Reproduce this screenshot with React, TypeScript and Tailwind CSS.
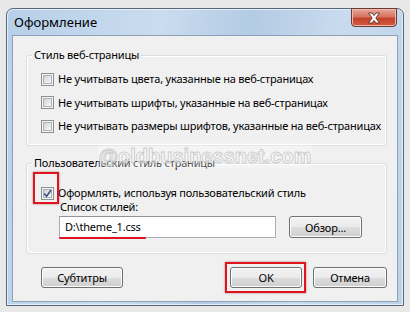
const btn =
  'h-[21px] rounded-[3px] border border-[#707070] bg-[linear-gradient(to_bottom,#f2f2f2_0%,#ebebeb_50%,#dddddd_51%,#cfcfcf_100%)] shadow-[inset_0_0_0_1px_#fcfcfc] flex items-center justify-center text-[11px] leading-none';

function Check({ checked = false }: { checked?: boolean }) {
  return (
    <span className="w-[13px] h-[13px] shrink-0 border border-[#8e8f8f] bg-[#f4f4f4] p-[1px] flex">
      <span className="relative flex-1 border border-[#aeb3b9] bg-[linear-gradient(135deg,#cbcfd5_0%,#e4e6e9_50%,#f6f6f6_100%)]">
        {checked && (
          <svg viewBox="0 0 9 9" className="absolute -left-[1px] -top-[1px] w-[9px] h-[9px]">
            <path d="M1.2 4.6 L3.6 7.2 L7.9 1.3" fill="none" stroke="#3b4f84" strokeWidth="1.6" />
          </svg>
        )}
      </span>
    </span>
  );
}

function Row({ children, checked }: { children: React.ReactNode; checked?: boolean }) {
  return (
    <div className="h-[14px] flex items-center gap-[4px] whitespace-nowrap">
      <Check checked={checked} />
      <span className="leading-[14px]">{children}</span>
    </div>
  );
}

function Group({ title, children }: { title: string; children: React.ReactNode }) {
  return (
    <div className="relative h-[91px] rounded-[3px] border border-[#d5dfe5] shadow-[inset_0_0_0_1px_#ffffff]">
      <span className="absolute left-[5px] -top-[8px] bg-[#f0f0f0] px-[2px] leading-[14px] whitespace-nowrap">
        {title}
      </span>
      {children}
    </div>
  );
}

export default function App() {
  return (
    <div className="relative w-[410px] h-[312px] bg-[#e8e8e8] pt-[8px] px-[6px] font-['Noto_Sans',sans-serif] text-[11px] tracking-[-0.2px] text-black">
      <div className="h-[298px] rounded-t-[7px] border border-[#56687a] bg-[linear-gradient(100deg,#b7cfe8_0%,#cadcef_35%,#b3cbe4_55%,#c9dbee_75%,#bdd3ea_100%)] shadow-[inset_0_0_0_1px_#e4eef8] flex flex-col">
        {/* title bar */}
        <div className="h-[26px] flex items-start justify-between">
          <span className="pl-[7px] pt-[5px] text-[13px] leading-[16px] tracking-normal">Оформление</span>
          <div className="mr-[6px] -mt-[1px] w-[46px] h-[19px] rounded-b-[4px] border border-[#6b3a33] bg-[linear-gradient(to_bottom,#e9a99b_0%,#d7735f_45%,#c2432b_55%,#d35a3f_100%)] shadow-[inset_0_0_0_1px_#f1b9ab] flex items-center justify-center">
            <svg viewBox="0 0 14 12" className="w-[14px] h-[12px]">
              <path
                d="M1.5 1 H5 L7 3.6 L9 1 H12.5 L8.8 6 L12.5 11 H9 L7 8.4 L5 11 H1.5 L5.2 6 Z"
                fill="#ffffff"
                stroke="#5b3129"
                strokeWidth="0.9"
                strokeLinejoin="round"
              />
            </svg>
          </div>
        </div>

        {/* client area */}
        <div className="flex-1 mx-[5px] mb-[3px] border border-[#8ca1b6] bg-[#f0f0f0] pt-[19px] pl-[13px] pr-[10px]">
          <Group title="Стиль веб-страницы">
            <div className="pt-[16px] pl-[14px] flex flex-col gap-[9.5px]">
              <Row>Не учитывать цвета, указанные на веб-страницах</Row>
              <Row>Не учитывать шрифты, указанные на веб-страницах</Row>
              <Row>Не учитывать размеры шрифтов, указанные на веб-страницах</Row>
            </div>
          </Group>

          <div className="mt-[17px]">
            <Group title="Пользовательский стиль страницы">
              <div className="relative pt-[22px] pl-[14px]">
                <Row checked>Оформлять, используя пользовательский стиль</Row>
                <span className="absolute left-[6px] top-[8px] w-[26px] h-[32px] border-2 border-[#e0141e] shadow-[0_0_2px_rgba(120,0,0,0.5)]" />
              </div>
              <div className="pl-[32px]">
                <div className="leading-[14px] pl-[1px]">Список стилей:</div>
                <div className="mt-[2px] flex items-center">
                  <div className="relative w-[217px] h-[22px] border border-[#abadb3] border-t-[#8f959c] bg-white flex items-center pl-[5px]">
                    D:\theme_1.css
                    <span className="absolute -left-[1px] -bottom-[2px] w-[87px] h-[2px] rounded-full bg-[#e0141e]" />
                  </div>
                  <div className={`${btn} ml-[13px] w-[73px] h-[22px]`}>Обзор...</div>
                </div>
              </div>
            </Group>
          </div>

          <div className="mt-[13px] flex items-center">
            <div className={`${btn} ml-[15px] w-[82px]`}>Субтитры</div>
            <div className="flex-1" />
            <div className="relative">
              <div className={`${btn} w-[72px] border-[#3c7fb1] shadow-[inset_0_0_0_1px_#78c6f2]`}>OK</div>
              <span className="absolute -left-[5px] -top-[5px] -right-[4px] -bottom-[5px] border-2 border-[#e0141e] shadow-[0_0_2px_rgba(120,0,0,0.5)]" />
            </div>
            <div className={`${btn} ml-[11px] w-[74px]`}>Отмена</div>
          </div>
        </div>
      </div>

      {/* watermark */}
      <div className="absolute left-[98px] top-[143px] w-[214px] h-[25px] bg-[rgba(255,255,255,0.3)] flex items-center justify-center font-['Liberation_Sans',sans-serif] font-bold text-[20px] leading-none tracking-normal text-[rgba(255,255,255,0.55)] [-webkit-text-stroke:1px_rgba(175,175,175,0.6)]">
        @oldbusinessnet.com
      </div>
    </div>
  );
}
